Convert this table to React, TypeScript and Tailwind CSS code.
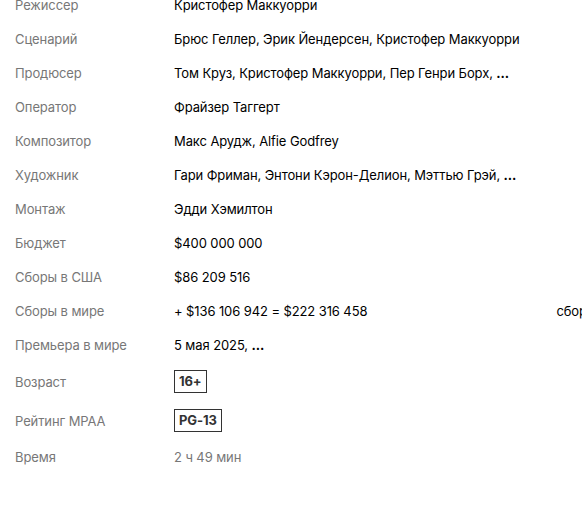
const rows: { label: string; value: React.ReactNode; badge?: boolean; muted?: boolean }[] = [
  { label: "Режиссер", value: "Кристофер Маккуорри" },
  { label: "Сценарий", value: "Брюс Геллер, Эрик Йендерсен, Кристофер Маккуорри" },
  {
    label: "Продюсер",
    value: (
      <>
        Том Круз, Кристофер Маккуорри, Пер Генри Борх, <b className="font-bold">...</b>
      </>
    ),
  },
  { label: "Оператор", value: "Фрайзер Таггерт" },
  { label: "Композитор", value: "Макс Арудж, Alfie Godfrey" },
  {
    label: "Художник",
    value: (
      <>
        Гари Фриман, Энтони Кэрон-Делион, Мэттью Грэй, <b className="font-bold">...</b>
      </>
    ),
  },
  { label: "Монтаж", value: "Эдди Хэмилтон" },
  { label: "Бюджет", value: "$400 000 000" },
  { label: "Сборы в США", value: "$86 209 516" },
  {
    label: "Сборы в мире",
    value: (
      <>
        <span>+ $136 106 942 = $222 316 458</span>
        <span className="ml-[189px]">сборы</span>
      </>
    ),
  },
  {
    label: "Премьера в мире",
    value: (
      <>
        5 мая 2025, <b className="font-bold">...</b>
      </>
    ),
  },
  { label: "Возраст", value: "16+", badge: true },
  { label: "Рейтинг MPAA", value: "PG-13", badge: true },
  { label: "Время", value: "2 ч 49 мин", muted: true },
];

export default function App() {
  return (
    <div className="h-[506px] w-[582px] overflow-hidden bg-white font-['Inter',sans-serif] text-[13px] leading-[18px] tracking-[-0.1px]">
      <div className="-mt-[12px] pl-[15px]">
        {rows.map((row) => (
          <div key={row.label} className="flex items-center py-2 whitespace-nowrap">
            <div className="w-[159px] shrink-0 text-[#777777]">{row.label}</div>
            {row.badge ? (
              <span className="border border-[#333333] px-[4px] py-[1px] text-[13px] leading-[19px] font-bold text-[#333333]">
                {row.value}
              </span>
            ) : (
              <div className={row.muted ? "text-[#777777]" : "text-black"}>{row.value}</div>
            )}
          </div>
        ))}
      </div>
    </div>
  );
}
